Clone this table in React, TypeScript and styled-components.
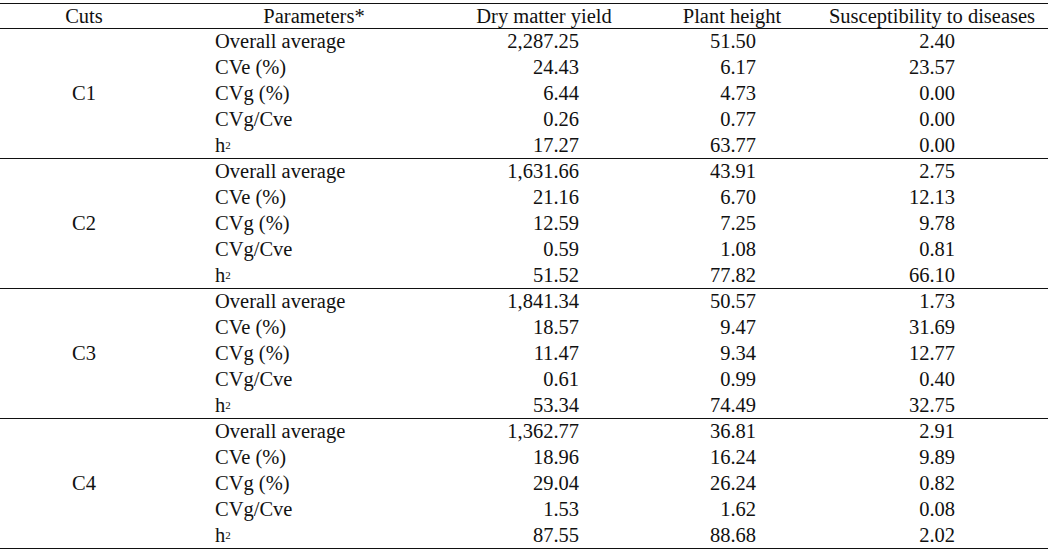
import React from 'react';
import styled, { createGlobalStyle } from 'styled-components';

const Global = createGlobalStyle`
    body {
        margin: 0;
        background: #fff;
        font-family: 'Liberation Serif', 'Times New Roman', serif;
        color: #111;
    }
`;

const COLS = '168px 292px 168px 208px 212px';

const Page = styled.div`
    padding-top: 3px;
    width: 1048px;
`;

const Header = styled.div`
    display: grid;
    grid-template-columns: ${COLS};
    height: 26px;
    box-sizing: border-box;
    border-top: 1px solid #111;
    border-bottom: 1px solid #111;
    font-size: 20.5px;
    line-height: 24px;
`;

const HeadCell = styled.div<{ $pr?: number }>`
    display: flex;
    justify-content: center;
    padding-right: ${(p) => p.$pr || 0}px;
    white-space: nowrap;
`;

const Group = styled.div`
    display: grid;
    grid-template-columns: ${COLS};
    grid-template-rows: repeat(5, 1fr);
    height: 130px;
    box-sizing: border-box;
    border-bottom: 1px solid #111;
    font-size: 20.5px;
`;

const CutCell = styled.div`
    grid-row: 1 / span 5;
    grid-column: 1;
    display: flex;
    align-items: center;
    justify-content: center;
`;

const Param = styled.div`
    grid-column: 2;
    padding-left: 47px;
    display: flex;
    align-items: center;
    white-space: nowrap;
`;

const Value = styled.div<{ $col: number; $pr: number }>`
    grid-column: ${(p) => p.$col};
    padding-right: ${(p) => p.$pr}px;
    display: flex;
    align-items: center;
    justify-content: flex-end;
`;

const Sup = styled.sup`
    font-size: 11px;
    vertical-align: 9px;
    line-height: 0;
`;

const params: React.ReactNode[] = [
    'Overall average',
    'CVe (%)',
    'CVg (%)',
    'CVg/Cve',
    <>
        h<Sup>2</Sup>
    </>,
];

const data: { cut: string; rows: string[][] }[] = [
    {
        cut: 'C1',
        rows: [
            ['2,287.25', '51.50', '2.40'],
            ['24.43', '6.17', '23.57'],
            ['6.44', '4.73', '0.00'],
            ['0.26', '0.77', '0.00'],
            ['17.27', '63.77', '0.00'],
        ],
    },
    {
        cut: 'C2',
        rows: [
            ['1,631.66', '43.91', '2.75'],
            ['21.16', '6.70', '12.13'],
            ['12.59', '7.25', '9.78'],
            ['0.59', '1.08', '0.81'],
            ['51.52', '77.82', '66.10'],
        ],
    },
    {
        cut: 'C3',
        rows: [
            ['1,841.34', '50.57', '1.73'],
            ['18.57', '9.47', '31.69'],
            ['11.47', '9.34', '12.77'],
            ['0.61', '0.99', '0.40'],
            ['53.34', '74.49', '32.75'],
        ],
    },
    {
        cut: 'C4',
        rows: [
            ['1,362.77', '36.81', '2.91'],
            ['18.96', '16.24', '9.89'],
            ['29.04', '26.24', '0.82'],
            ['1.53', '1.62', '0.08'],
            ['87.55', '88.68', '2.02'],
        ],
    },
];

const valuePad = [49, 80, 93];

const App = (): React.ReactElement => {
    return (
        <Page>
            <Global />
            <Header>
                <HeadCell>Cuts</HeadCell>
                <HeadCell>Parameters*</HeadCell>
                <HeadCell>Dry matter yield</HeadCell>
                <HeadCell>Plant height</HeadCell>
                <HeadCell $pr={20}>Susceptibility to diseases</HeadCell>
            </Header>
            {data.map((g) => (
                <Group key={g.cut}>
                    <CutCell>{g.cut}</CutCell>
                    {g.rows.map((r, i) => (
                        <React.Fragment key={i}>
                            <Param style={{ gridRow: i + 1 }}>{params[i]}</Param>
                            {r.map((v, j) => (
                                <Value key={j} $col={j + 3} $pr={valuePad[j]} style={{ gridRow: i + 1 }}>
                                    {v}
                                </Value>
                            ))}
                        </React.Fragment>
                    ))}
                </Group>
            ))}
        </Page>
    );
};

export default App;
